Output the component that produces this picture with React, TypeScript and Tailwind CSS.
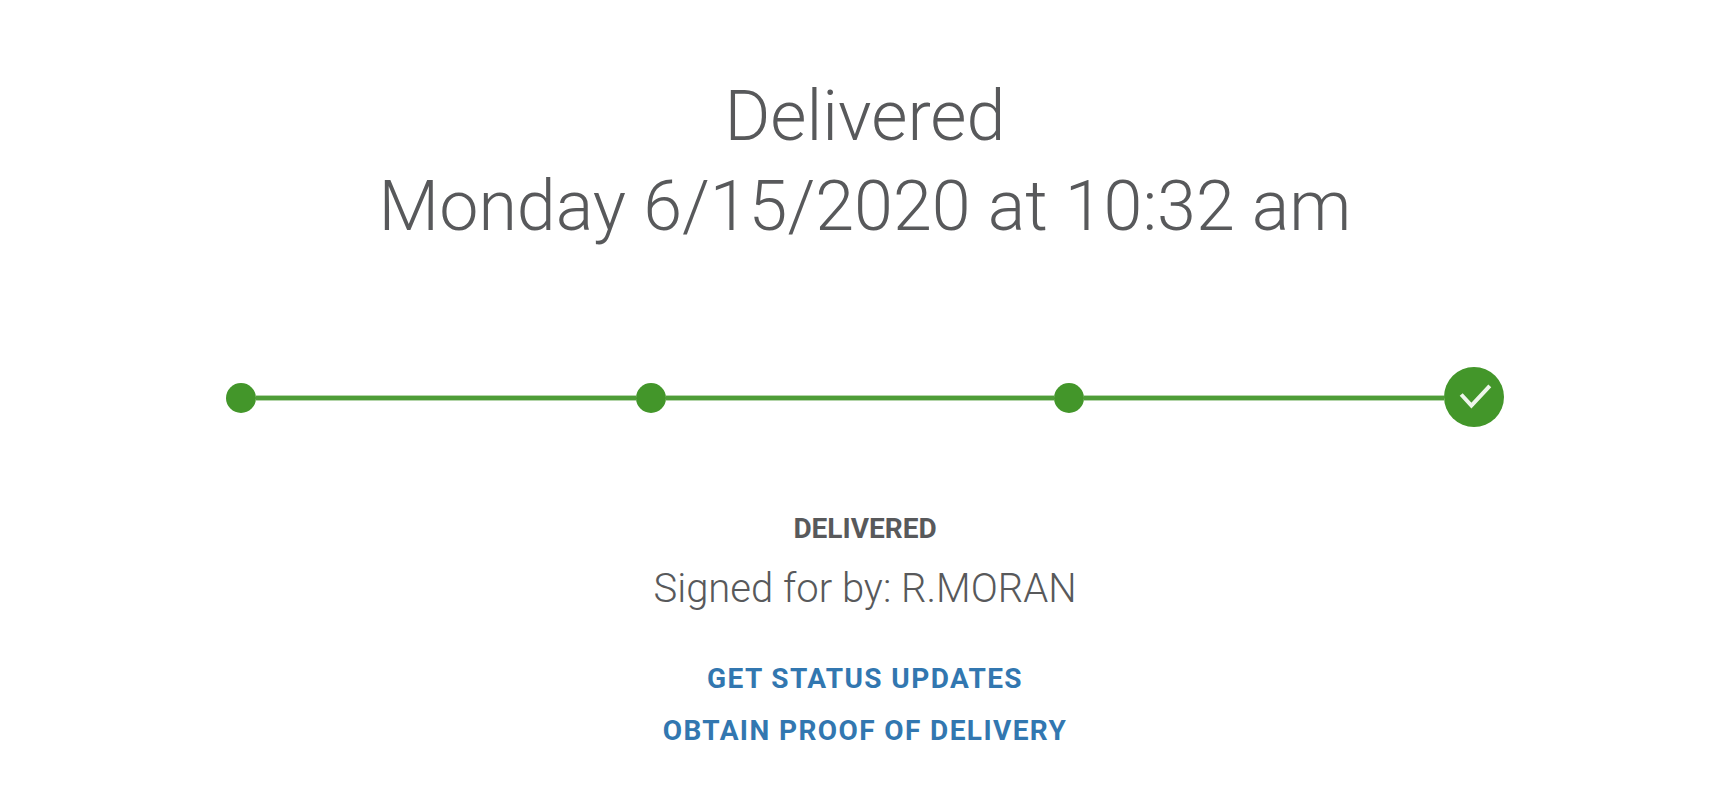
import clsx from "clsx";

const steps = [
    { name: "Label created", line: "grow-380" },
    { name: "Picked up", line: "grow-388" },
    { name: "In transit", line: "grow-360" },
    { name: "Delivered", line: null },
];

const links = [
    { label: "GET STATUS UPDATES", href: "#status-updates" },
    { label: "OBTAIN PROOF OF DELIVERY", href: "#proof-of-delivery" },
];

function CheckDot() {
    return (
        <svg viewBox="0 0 60 60" className="size-15 shrink-0" aria-hidden="true">
            <circle cx="30" cy="30" r="30" fill="#43962a" />
            <path
                d="M17.2 27.5 L27.4 38.6 L45.8 18.8"
                fill="none"
                stroke="#eef6eb"
                strokeWidth="4"
            />
        </svg>
    );
}

function ProgressTrack() {
    return (
        <div className="flex w-full max-w-[1278px] items-center">
            {steps.map((step) =>
                step.line ? (
                    <div key={step.name} className={clsx("flex basis-[30px] items-center pt-0.5", step.line)}>
                        <span className="size-[30px] shrink-0 rounded-full bg-[#43962a]" />
                        <span className="h-1.5 grow border-y border-[#b4d5aa] bg-[#4f9d38]" />
                    </div>
                ) : (
                    <CheckDot key={step.name} />
                )
            )}
        </div>
    );
}

export default function App() {
    return (
        <main className="flex min-h-screen flex-col items-center bg-white pt-[71px] pl-2 text-center font-['Roboto',sans-serif] text-[#58595b]">
            <h1 className="text-[70px] leading-[90px] font-light">
                Delivered
                <br />
                Monday 6/15/2020 at 10:32 am
            </h1>

            <div className="mt-[116px] flex w-full justify-center">
                <ProgressTrack />
            </div>

            <h2 className="mt-[81px] text-[28px] leading-[42px] font-bold">DELIVERED</h2>
            <p className="mt-[9px] text-[40px] leading-[60px] font-light">Signed for by: R.MORAN</p>

            <nav className="mt-[34px] flex flex-col items-center">
                {links.map((link) => (
                    <a key={link.label} href={link.href} className="text-[28px] leading-[52px] font-bold tracking-wider text-[#3277b0]">
                        {link.label}
                    </a>
                ))}
            </nav>
        </main>
    );
}
